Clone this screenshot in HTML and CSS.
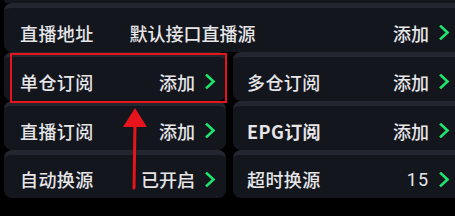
FILE: index.html
```html
<!DOCTYPE html>
<html lang="zh-CN">
<head>
  <meta charset="UTF-8" />
  <meta name="viewport" content="width=device-width, initial-scale=1.0" />
  <title>直播设置</title>
  <link rel="stylesheet" href="styles.css">
</head>
<body>
  <div class="screen">
    <div class="prev-card"></div>

    <div class="row">
      <div class="item wide">
        <span class="label">直播地址</span>
        <span class="source">默认接口直播源</span>
        <span class="value">添加</span>
        <svg class="chev" width="11" height="15" viewBox="0 0 11 15"><path d="M2 1.5 L8.5 7.5 L2 13.5" /></svg>
      </div>
    </div>

    <div class="row two">
      <div class="item">
        <span class="label">单仓订阅</span>
        <span class="value">添加</span>
        <svg class="chev" width="11" height="15" viewBox="0 0 11 15"><path d="M2 1.5 L8.5 7.5 L2 13.5" /></svg>
      </div>
      <div class="item">
        <span class="label">多仓订阅</span>
        <span class="value">添加</span>
        <svg class="chev" width="11" height="15" viewBox="0 0 11 15"><path d="M2 1.5 L8.5 7.5 L2 13.5" /></svg>
      </div>
    </div>

    <div class="row two">
      <div class="item">
        <span class="label">直播订阅</span>
        <span class="value">添加</span>
        <svg class="chev" width="11" height="15" viewBox="0 0 11 15"><path d="M2 1.5 L8.5 7.5 L2 13.5" /></svg>
      </div>
      <div class="item">
        <span class="label bold">EPG订阅</span>
        <span class="value">添加</span>
        <svg class="chev" width="11" height="15" viewBox="0 0 11 15"><path d="M2 1.5 L8.5 7.5 L2 13.5" /></svg>
      </div>
    </div>

    <div class="row two last">
      <div class="item">
        <span class="label">自动换源</span>
        <span class="value">已开启</span>
        <svg class="chev" width="11" height="15" viewBox="0 0 11 15"><path d="M2 1.5 L8.5 7.5 L2 13.5" /></svg>
      </div>
      <div class="item">
        <span class="label">超时换源</span>
        <span class="value num">15</span>
        <svg class="chev" width="11" height="15" viewBox="0 0 11 15"><path d="M2 1.5 L8.5 7.5 L2 13.5" /></svg>
      </div>
    </div>

    <div class="highlight"></div>
    <svg class="arrow" width="30" height="82" viewBox="0 0 30 82">
      <line x1="14" y1="16" x2="13" y2="80" stroke="#e8141c" stroke-width="3" stroke-linecap="round" />
      <polygon points="14,0 2,19 26,19" fill="#e8141c" />
    </svg>
  </div>
</body>
</html>
```

FILE: styles.css
```css
body {
  margin: 0;
  background-color: #000;
  font-family: "Noto Sans CJK SC", "Noto Sans", sans-serif;
  color: #e6e6e8;
}
.screen {
  position: relative;
  width: 455px;
  height: 216px;
  overflow: hidden;
  padding-left: 4px;
  box-sizing: border-box;
}
.prev-card {
  height: 3px;
  margin-right: -20px;
  background-color: #15171f;
  border-radius: 0 0 8px 8px;
}
.row {
  display: grid;
  grid-template-columns: 1fr;
  height: 49px;
  margin-right: -20px;
}
.row.two {
  grid-template-columns: 222px 1fr;
  column-gap: 7px;
}
.item {
  display: flex;
  align-items: center;
  padding: 5px 25px 0 16px;
  background-color: #14161e;
  border-top: 5px solid #23252f;
  border-radius: 8px;
  font-size: 18px;
  font-weight: 500;
  box-sizing: border-box;
}
.row.two .item:first-child {
  padding-right: 10px;
}
.row.two .item:last-child {
  padding-left: 14px;
}
.label {
  letter-spacing: 0.4px;
}
.label.bold {
  font-weight: bold;
}
.source {
  margin-left: 36px;
}
.value {
  margin-left: auto;
}
.value.num {
  font-family: Roboto, "Noto Sans", sans-serif;
  font-weight: normal;
  letter-spacing: 1px;
}
.chev {
  margin-left: 10px;
  fill: none;
  stroke: #1ee66d;
  stroke-width: 2.6;
  stroke-linecap: square;
}
.row.last {
  height: 48px;
}
.highlight {
  position: absolute;
  left: 10px;
  top: 53px;
  width: 217px;
  height: 50px;
  border: 2px solid #e8141c;
  box-sizing: border-box;
}
.arrow {
  position: absolute;
  left: 121px;
  top: 108px;
}
```
